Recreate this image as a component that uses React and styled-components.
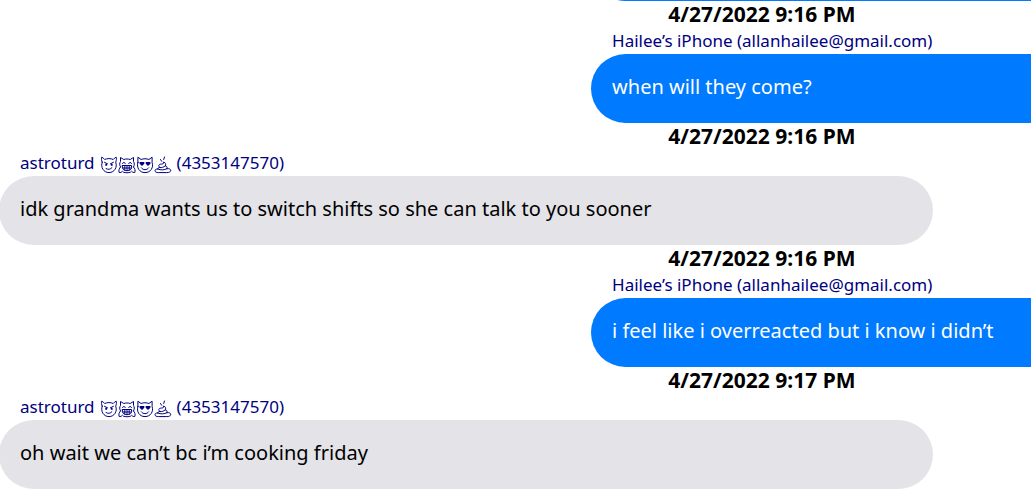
import React from 'react';
import styled, { createGlobalStyle } from 'styled-components';

const messages = [
  { id: 1, sent: true },
  { id: 2, sent: true, date: '4/27/2022 9:16 PM', text: 'when will they come?' },
  { id: 3, sent: false, date: '4/27/2022 9:16 PM', text: 'idk grandma wants us to switch shifts so she can talk to you sooner' },
  { id: 4, sent: true, date: '4/27/2022 9:16 PM', text: 'i feel like i overreacted but i know i didn’t' },
  { id: 5, sent: false, date: '4/27/2022 9:17 PM', text: 'oh wait we can’t bc i’m cooking friday' },
];

export default function App () {
  return (
    <>
      <GlobalStyle />
      <Window>
        <Thread>
          {messages.map((message) => (
            <Message key={message.id} {...message} />
          ))}
        </Thread>
      </Window>
    </>
  );
};

function Message ({ sent, date, text }) {
  return (
    <Row>
      {date && <Time>{date}</Time>}
      <Side $sent={sent}>
        {date && <Sender>{sent ? 'Hailee’s iPhone (allanhailee@gmail.com)' : <Contact />}</Sender>}
        <Bubble $sent={sent}>{text}</Bubble>
      </Side>
    </Row>
  );
}

function Contact () {
  return (
    <>
      astroturd
      <Faces>
        <Devil />
        <GrinningCat />
        <HeartCat />
        <Poo />
      </Faces>
      (4353147570)
    </>
  );
}

function Devil () {
  return (
    <Glyph viewBox="0 0 18 18">
      <path d="M2.2 6.2C1.4 4.3 1.3 2.3 1.7 1.2c1.2.5 2.3 1.3 3 2.3 2.5-1.2 6-1.2 8.500 0 .7-1 1.800-1.800 3-2.300.4 1.100.3 3.100-.5 5 1.900 5-1.300 10.400-6.700 10.400S.3 11.200 2.200 6.200z" />
      <path d="M4.500 6.300l3 1.500M13.400 6.300l-3 1.500M6 12.600c2.200 1.300 4.500.9 6-1" />
      <path d="M5.300 7.800h1.800v2H5.300zM10.800 7.800h1.800v2h-1.800z" fill="currentColor" stroke="none" />
    </Glyph>
  );
}

function GrinningCat () {
  return (
    <Glyph viewBox="0 0 18 18">
      <path d="M2.500 11C1.300 9 1.500 7 2.500 5.500v-4l3.300 2c2-.7 4.400-.7 6.400 0l3.300-2v4c1 1.500 1.200 3.500 0 5.500M2.500 11c-1.500 1.500-2 3.500-1.300 5.500 1.200.2 2.500-.2 3.300-1.200M15.500 11c1.500 1.500 2 3.500 1.300 5.500-1.200.2-2.500-.2-3.300-1.200M5.500 16.200c2.200.8 4.800.8 7 0" />
      <path d="M4.500 7.500c.6-1.500 2.200-1.500 2.800 0M10.700 7.500c.6-1.500 2.200-1.500 2.800 0" />
      <path d="M4.500 9.500h9v2c0 2-1.800 3.200-4.500 3.200s-4.500-1.200-4.500-3.200zM4.700 12h8.600M6.800 9.500v4.500M9 9.500v5M11.200 9.500v4.500" />
    </Glyph>
  );
}

function HeartCat () {
  return (
    <Glyph viewBox="0 0 18 18">
      <path d="M1.900 6.500V1.200l3.200 2.300c2.400-1 5.400-1 7.800 0l3.200-2.300v5.300c1.700 5-1.500 10.100-7.100 10.100S.2 11.500 1.900 6.500z" />
      <path d="M5.300 11.800c1.800 2.600 5.600 2.600 7.400 0" />
      <path d="M3.600 6h4.700v1.700L6 10.100 3.600 7.700zM9.700 6h4.700v1.700L12 10.100 9.700 7.700z" fill="currentColor" stroke="none" />
    </Glyph>
  );
}

function Poo () {
  return (
    <Glyph viewBox="0 0 18 18">
      <path d="M6 11.500c-1.700-.6-1.700-3 .3-3.300 2-.2 4-.2 3.300-2.200 2 .6 2.600 2.600 1.600 3.900 2 .2 2.300 1.700 1.500 2.900 2.500-.5 4.300.3 4 1.900-.2 1.200-1.700 1.900-4 1.900H4.500c-2 0-3.300-.6-3.500-1.700-.2-1.200 1-2.200 3-1.800-.3-1 .5-1.800 2-1.600z" />
      <path d="M6 11.500c2 .2 3.800-.2 5.200-1.600M4 13.100c3 1.200 6.200 1 8.700-.3M6.500 3.500l1.200 1.800M10.500 1l-.8 2.500" />
    </Glyph>
  );
}

const GlobalStyle = createGlobalStyle`
  body {
    margin: 0;
    background: #fff;
    font-family: 'Noto Sans', 'Open Sans', sans-serif;
  }
`;

/* the newest message stays at the bottom, older ones run off the top */
const Window = styled.main`
  display: flex;
  flex-direction: column;
  justify-content: flex-end;
  height: 100vh;
  padding-bottom: 3px;
  box-sizing: border-box;
  overflow: hidden;
`;

const Thread = styled.div`
  width: 148%;
  margin-left: -1px;
`;

const Row = styled.article`
  display: flex;
  flex-direction: column;
`;

const Time = styled.time`
  font-size: 21px;
  font-weight: 700;
  line-height: 26px;
  text-align: center;
  color: #000;
`;

const Side = styled.div`
  width: 61.2%;
  min-width: 0;
  align-self: ${(props) => (props.$sent ? 'flex-end' : 'flex-start')};
`;

const Sender = styled.div`
  display: flex;
  align-items: center;
  gap: 5px;
  padding-left: 21px;
  font-size: 17px;
  line-height: 27px;
  color: navy;
`;

const Bubble = styled.div`
  min-height: 69px;
  padding: 18px 21px;
  box-sizing: border-box;
  border-radius: 35px;
  font-size: 20px;
  line-height: 30px;
  color: ${(props) => (props.$sent ? '#fff' : '#000')};
  background: ${(props) => (props.$sent ? '#007aff' : '#e4e3e8')};
`;

const Faces = styled.span`
  display: flex;
  padding-top: 4px;
`;

const Glyph = styled.svg`
  width: 18px;
  height: 18px;
  fill: none;
  stroke: currentColor;
  stroke-width: 1;
  stroke-linecap: round;
  stroke-linejoin: round;
`;
